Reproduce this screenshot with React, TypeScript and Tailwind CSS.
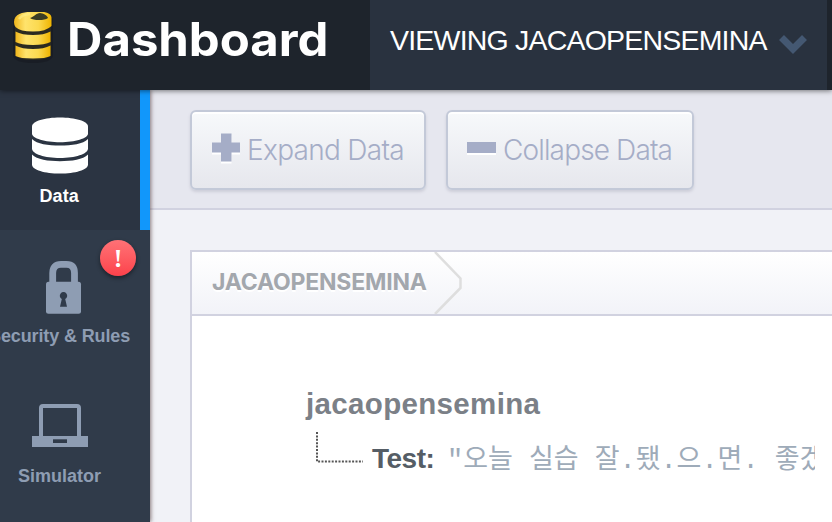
import type { ReactNode } from 'react';

function GoldDatabase() {
  return (
    <svg className="mt-[10px] h-[54px] w-[44px] shrink-0" viewBox="0 0 44 54">
      <defs>
        <linearGradient id="gold" x1="0" x2="1" y1="0" y2="0">
          <stop offset="0" stopColor="#f0b61c" />
          <stop offset="0.3" stopColor="#ffe36c" />
          <stop offset="0.65" stopColor="#fbd950" />
          <stop offset="1" stopColor="#efb400" />
        </linearGradient>
      </defs>
      <path d="M3 8V46Q5 53 23 53T43 46V8Z" fill="#15171d" opacity=".45" />
      <path d="M5 9V45Q8 50 23 50T41 45V9Z" fill="#2b2a20" />
      <path d="M5.500 35.500Q12 39 23 39T40.500 35.500V46Q36 48.500 23 48.500T5.500 46Z" fill="url(#gold)" />
      <path d="M5.500 21.500Q12 25 23 25T40.500 21.500V32Q35 35 23 35T5.500 32Z" fill="url(#gold)" />
      <path d="M4 12C4 4 13 2 20 2H32C38 2 41.500 4.500 41.500 8V16Q36 21.500 23 21.500T5.500 17Q4 15 4 12Z" fill="url(#gold)" />
      <path d="M20 8C24 7 26 3 30 3C33 3 38 6 38 8Q35 10 29 10T20 8Z" fill="#3b3d24" />
      <path d="M9 9Q12 4.500 20 4" fill="none" stroke="#fff08a" strokeWidth="2.500" opacity=".6" />
    </svg>
  );
}

function DatabaseIcon() {
  return (
    <svg className="h-[58px] w-[56px]" viewBox="0 0 56 58" fill="#fff">
      <path d="M0 9.500C0 4 13 .5 28 .5S56 4 56 9.500V16.500C56 21.500 43 25.200 28 25.200S0 21.500 0 16.500Z" />
      <path d="M0 22C5 27 16 28.500 28 28.500S51 27 56 22V31.500C56 37 43 41 28 41S0 37 0 31.500Z" />
      <path d="M0 37.500C5 42.500 16 44.200 28 44.200S51 42.500 56 37.500V47.500C56 53 43 56.600 28 56.600S0 53 0 47.500Z" />
    </svg>
  );
}

function LockIcon() {
  return (
    <svg className="h-[54px] w-[36px]" viewBox="0 0 36 54">
      <path d="M6.700 24V13Q6.700 4.300 15 4.300H20.500Q28.500 4.300 28.500 13V24" fill="none" stroke="#8e9db3" strokeWidth="6.800" />
      <rect x="0" y="21.700" width="35" height="32" rx="2.500" fill="#8e9db3" />
      <path d="M14 46.700L15.800 39A3.700 3.700 0 1 1 19.200 39L21 46.700Z" fill="#303b4a" />
    </svg>
  );
}

function LaptopIcon() {
  return (
    <svg className="h-[43px] w-[56px]" viewBox="0 0 56 43">
      <path d="M9 33V4Q9 2 11 2H45Q47 2 47 4V33" fill="none" stroke="#8e9db3" strokeWidth="4" />
      <path d="M0 32H56V43H0Z" fill="#8e9db3" />
      <path d="M21 35.300H35V39H21Z" fill="#303b4a" />
    </svg>
  );
}

function ActionButton({ icon, children, className }: { icon: ReactNode; children: ReactNode; className: string }) {
  return (
    <button
      className={`flex h-20 items-start rounded-[6px] border-2 border-[#c3c9d8] bg-linear-to-b from-[#f7f9fb] to-[#e6e7ed] pl-5 shadow-[0_2px_3px_#cdced9,inset_0_2px_0_#fff] ${className}`}
    >
      {icon}
      {children}
    </button>
  );
}

export default function App() {
  return (
    <div className="flex h-[522px] w-[832px] flex-col overflow-hidden bg-[#f1f2f7] font-['Liberation_Sans',Arial,sans-serif]">
      <header className="relative z-10 flex h-[90px] shrink-0 bg-[#1e242c] shadow-[0_1px_5px_rgba(0,0,0,.5)]">
        <div className="flex w-[370px] items-start pl-[10px]">
          <GoldDatabase />
          <h1 className="mt-[11px] ml-[13px] origin-left scale-x-[1.066] whitespace-nowrap font-['Inter',sans-serif] text-[46px] leading-[56px] font-bold text-white">
            Dashboard
          </h1>
        </div>
        <div className="flex w-[457px] items-start bg-[#29323f] pl-5">
          <span className="mt-[23px] w-[389px] whitespace-nowrap text-[28.500px] leading-[34px] tracking-[-0.800px] text-white">
            VIEWING JACAOPENSEMINA
          </span>
          <svg className="mt-[34px] h-[21px] w-[28px] shrink-0" viewBox="0 0 28 21">
            <path d="M2.500 3.500L14 15L25.500 3.500" fill="none" stroke="#445872" strokeWidth="7" />
          </svg>
        </div>
      </header>

      <div className="flex min-h-0 flex-1">
        <nav className="relative z-[5] flex w-[150px] shrink-0 flex-col bg-[#303b4a] text-[18px] leading-[22px] font-bold text-[#8e9db3] shadow-[1px_0_4px_rgba(80,55,55,.65)]">
          <a className="flex h-[140px] flex-col items-start border-r-[10px] border-[#1197fb] bg-[#2b3442] pt-[27px] text-white">
            <div className="ml-8"><DatabaseIcon /></div>
            <span className="mt-[10px] ml-[39.500px] tracking-[0.1px]">Data</span>
          </a>
          <a className="relative flex h-[140px] flex-col items-start pt-[30px]">
            <div className="ml-[46px]"><LockIcon /></div>
            <span className="mt-[11px] ml-[-11px] tracking-[-0.120px] whitespace-nowrap">Security &amp; Rules</span>
            <span className="absolute top-[10px] left-[100px] flex h-9 w-9 items-center justify-center rounded-full bg-linear-to-b from-[#ff7176] to-[#fc414b] pt-[2px] font-['Liberation_Serif',serif] text-[26px] text-white shadow-[0_2px_4px_rgba(0,0,0,.45)]">
              !
            </span>
          </a>
          <a className="flex flex-col items-start pt-[34px]">
            <div className="ml-8"><LaptopIcon /></div>
            <span className="mt-[18px] ml-[18px]">Simulator</span>
          </a>
        </nav>

        <main className="flex min-w-0 flex-1 flex-col">
          <div className="flex h-[120px] shrink-0 gap-5 border-b-2 border-[#d1d2e0] bg-[#e6e7ef] pt-5 pl-10 font-['Inter',sans-serif] text-[28px] leading-[34px] font-light whitespace-nowrap text-[#a5adc7] [text-shadow:0_2px_0_#fff]">
            <ActionButton
              className="w-[236px]"
              icon={
                <svg className="mt-[21px] mr-[7px] h-[30px] w-7 shrink-0 drop-shadow-[0_2px_0_white]" viewBox="0 0 28 30">
                  <path d="M9 0.500H19.500V9.500H28V19.500H19.500V28.500H9V19.500H0V9.500H9Z" fill="#a5adc7" />
                </svg>
              }
            >
              <span className="mt-[21px] tracking-[-0.700px]">Expand Data</span>
            </ActionButton>
            <ActionButton
              className="w-[248px]"
              icon={<span className="mt-[30px] -ml-px mr-[7px] h-[11px] w-[29px] shrink-0 bg-[#a5adc7] shadow-[0_2px_0_#fff]" />}
            >
              <span className="mt-[21px] tracking-[-0.860px]">Collapse Data</span>
            </ActionButton>
          </div>

          <section className="mt-10 ml-10 flex flex-1 flex-col overflow-hidden border-t-2 border-l-2 border-[#d1d2e0] bg-white">
            <div className="flex h-[64px] shrink-0 items-start border-b-2 border-[#d1d2e0] bg-linear-to-b from-white to-[#f2f3f8] pl-[20px]">
              <span className="mt-[15px] w-[222px] whitespace-nowrap font-['Inter',sans-serif] text-[23px] leading-[30px] font-bold tracking-[-0.200px] text-[#a3a7ad] [text-shadow:0_2px_0_#fff]">
                JACAOPENSEMINA
              </span>
              <svg className="h-[62px] w-[30px] shrink-0" viewBox="0 0 30 62">
                <path d="M1 0L26.500 26.500V36L1 62" fill="none" stroke="#dedede" strokeWidth="2.500" />
              </svg>
            </div>
            <div className="pt-[71px] pl-[114px]">
              <div className="text-[29.500px] leading-[34px] font-bold tracking-[0.340px] text-[#7b8087]">jacaopensemina</div>
              <div className="flex items-start pl-[9px]">
                <svg className="mt-[11px] h-[32px] w-[48px] shrink-0" viewBox="0 0 48 32">
                  <path d="M2 0V29.500H48" fill="none" stroke="#555" strokeWidth="2" strokeDasharray="2 1.400" />
                </svg>
                <span className="mt-[21px] ml-[9px] w-[63px] text-[28px] leading-[34px] font-bold tracking-[-0.5px] text-[#555d65]">Test:</span>
                <span className="mt-[22px] ml-[12px] w-[368px] shrink-0 overflow-hidden font-['Liberation_Mono','Noto_Sans_CJK_KR',monospace] text-[27px] leading-[36px] font-normal tracking-[-0.040px] whitespace-nowrap text-[#9eabb9]">
                  "오늘 실습 잘.됐.으.면. 좋겠
                </span>
              </div>
            </div>
          </section>
        </main>
      </div>
    </div>
  );
}
